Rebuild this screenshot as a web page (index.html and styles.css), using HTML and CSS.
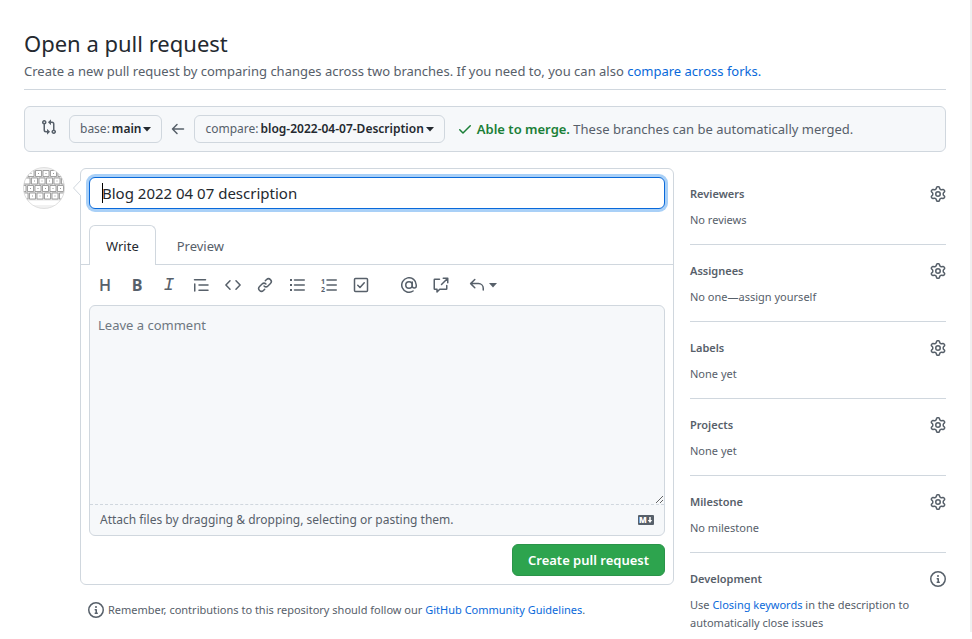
FILE: index.html
```html
<!DOCTYPE html>
<html lang="en">
<head>
<meta charset="utf-8">
<title>Open a pull request</title>
<link rel="stylesheet" href="styles.css">
</head>
<body>
<svg class="sprite" aria-hidden="true">
  <symbol id="gear" viewBox="0 0 16 16"><path d="M8 0a8.2 8.2 0 0 1 .701.031C9.444.095 9.99.645 10.16 1.29l.288 1.107c.018.066.079.158.212.224.231.114.454.243.668.386.123.082.233.09.299.071l1.103-.303c.644-.176 1.392.021 1.82.63.27.385.506.792.704 1.218.315.675.111 1.422-.364 1.891l-.814.806c-.049.048-.098.147-.088.294.016.257.016.515 0 .772-.01.147.038.246.088.294l.814.806c.475.469.679 1.216.364 1.891a7.977 7.977 0 0 1-.704 1.217c-.428.61-1.176.807-1.82.63l-1.102-.302c-.067-.019-.177-.011-.3.071a5.909 5.909 0 0 1-.668.386c-.133.066-.194.158-.211.224l-.29 1.106c-.168.646-.715 1.196-1.458 1.26a8.006 8.006 0 0 1-1.402 0c-.743-.064-1.289-.614-1.458-1.26l-.289-1.106c-.018-.066-.079-.158-.212-.224a5.738 5.738 0 0 1-.668-.386c-.123-.082-.233-.09-.299-.071l-1.103.303c-.644.176-1.392-.021-1.82-.63a8.12 8.12 0 0 1-.704-1.218c-.315-.675-.111-1.422.363-1.891l.815-.806c.05-.048.098-.147.088-.294a6.214 6.214 0 0 1 0-.772c.01-.147-.038-.246-.088-.294l-.815-.806C.635 6.045.431 5.298.746 4.623a7.92 7.92 0 0 1 .704-1.217c.428-.61 1.176-.807 1.82-.63l1.102.302c.067.019.177.011.3-.071.214-.143.437-.272.668-.386.133-.066.194-.158.211-.224l.29-1.106C6.009.645 6.556.095 7.299.03 7.53.01 7.764 0 8 0Zm-.571 1.525c-.036.003-.108.036-.137.146l-.289 1.105c-.147.561-.549.967-.998 1.189-.173.086-.34.183-.5.29-.417.278-.97.423-1.529.27l-1.103-.303c-.109-.03-.175.016-.195.045-.22.312-.412.644-.573.99-.014.031-.021.11.059.19l.815.806c.411.406.562.957.53 1.456a4.709 4.709 0 0 0 0 .582c.032.499-.119 1.05-.53 1.456l-.815.806c-.081.08-.073.159-.059.19.162.346.353.677.573.989.02.03.085.076.195.046l1.102-.303c.56-.153 1.113-.008 1.53.27.161.107.328.204.501.29.447.222.85.629.997 1.189l.289 1.105c.029.109.101.143.137.146a6.6 6.6 0 0 0 1.142 0c.036-.003.108-.036.137-.146l.289-1.105c.147-.561.549-.967.998-1.189.173-.086.34-.183.5-.29.417-.278.97-.423 1.529-.27l1.103.303c.109.029.175-.016.195-.045.22-.313.411-.644.573-.99.014-.031.021-.11-.059-.19l-.815-.806c-.411-.406-.562-.957-.53-1.456a4.709 4.709 0 0 0 0-.582c-.032-.499.119-1.05.53-1.456l.815-.806c.081-.08.073-.159.059-.19a6.464 6.464 0 0 0-.573-.989c-.02-.03-.085-.076-.195-.046l-1.102.303c-.56.153-1.113.008-1.53-.27a4.44 4.44 0 0 0-.501-.29c-.447-.222-.85-.629-.997-1.189l-.289-1.105c-.029-.11-.101-.143-.137-.146a6.6 6.6 0 0 0-1.142 0ZM11 8a3 3 0 1 1-6 0 3 3 0 0 1 6 0ZM9.5 8a1.5 1.5 0 1 0-3.001.001A1.5 1.5 0 0 0 9.5 8Z"/></symbol>
  <symbol id="info" viewBox="0 0 16 16"><path d="M0 8a8 8 0 1 1 16 0A8 8 0 0 1 0 8Zm8-6.5a6.5 6.5 0 1 0 0 13 6.5 6.5 0 0 0 0-13ZM6.5 7.75A.75.75 0 0 1 7.25 7h1a.75.75 0 0 1 .75.75v2.75h.25a.75.75 0 0 1 0 1.5h-2a.75.75 0 0 1 0-1.5h.25v-2h-.25a.75.75 0 0 1-.75-.75ZM8 6a1 1 0 1 1 0-2 1 1 0 0 1 0 2Z"/></symbol>
  <symbol id="caret" viewBox="0 0 8 5"><path d="M0 0h8L4 4.500Z"/></symbol>
</svg>

<main class="page">
  <header class="page-head">
    <h1>Open a pull request</h1>
    <p>Create a new pull request by comparing changes across two branches. If you need to, you can also <a href="#forks">compare across forks.</a></p>
  </header>

  <section class="range" aria-label="Branches">
    <svg class="icon range-icon" viewBox="0 0 16 16" aria-hidden="true"><path d="M9.573.677A.25.25 0 0 1 10 .854V2.500h1A2.500 2.500 0 0 1 13.500 5v5.628a2.251 2.251 0 1 1-1.500 0V5a1 1 0 0 0-1-1h-1v1.646a.25.25 0 0 1-.427.177L7.177 3.427a.25.25 0 0 1 0-.354L9.573.677ZM6 12v-1.646a.25.25 0 0 1 .427-.177l2.396 2.396a.25.25 0 0 1 0 .354l-2.396 2.396A.25.25 0 0 1 6 15.146V13.500H5A2.500 2.500 0 0 1 2.500 11V5.372a2.250 2.250 0 1 1 1.500 0V11a1 1 0 0 0 1 1h1Zm6.750 0a.75.75 0 1 0 0 1.500.75.75 0 0 0 0-1.500ZM4 3.250a.75.75 0 1 0-1.500 0 .75.75 0 0 0 1.500 0Z"/></svg>
    <button type="button" class="branch">base: <b>main</b> <svg class="caret" aria-hidden="true"><use href="#caret"/></svg></button>
    <svg class="icon line arrow" viewBox="0 0 16 16" aria-hidden="true"><path d="M7 3.500 2.500 8 7 12.500M2.500 8h11"/></svg>
    <button type="button" class="branch">compare: <b>blog-2022-04-07-Description</b> <svg class="caret" aria-hidden="true"><use href="#caret"/></svg></button>
    <p class="merge"><svg class="icon" viewBox="0 0 16 16" aria-hidden="true"><path d="M13.780 4.220a.75.75 0 0 1 0 1.060l-7.250 7.250a.75.75 0 0 1-1.060 0L2.220 9.280a.75.75 0 0 1 1.060-1.060L6 10.940l6.720-6.720a.75.75 0 0 1 1.060 0Z"/></svg><span><b>Able to merge.</b> These branches can be automatically merged.</span></p>
  </section>

  <div class="columns">
    <svg class="avatar" viewBox="0 0 42 42" role="img" aria-label="Avatar">
      <defs><clipPath id="disc"><circle cx="21" cy="21" r="20.500"/></clipPath></defs>
      <g clip-path="url(#disc)">
        <rect width="42" height="42" fill="#f1f1f1"/>
        <path d="M0 3h42v32H0Z" fill="#e2e2e2"/>
        <g fill="#fff" stroke="#8e8e8e" stroke-width=".8">
          <path d="M5 3.500h6v6H5zM12.500 3.500h6v6h-6zM20 3.500h6v6h-6zM27.500 3.500h6v6h-6zM35 3.500h6v6h-6z"/>
          <path d="M1 11h6v6H1zM8.500 11h6v6h-6zM16 11h6v6h-6zM23.500 11h6v6h-6zM31 11h6v6h-6zM38.500 11h6v6h-6z"/>
          <path d="M-3 18.500h6v6h-6zM4.500 18.500h6v6h-6zM12 18.500h6v6h-6zM19.500 18.500h6v6h-6zM27 18.500h6v6h-6zM34.500 18.500h6v6h-6z"/>
          <path d="M-1 26h6v6h-6zM6.500 26h6v6h-6zM14 26h6v6h-6zM21.500 26h6v6h-6zM29 26h6v6h-6zM36.500 26h6v6h-6z"/>
        </g>
        <path d="M7.500 6.500h1m6.500 0h1m6.500 0h1m6.500 0h1M11 14h1m6.500 0h1m6.500 0h1m6.500 0h1M7 21.500h1m6.500 0h1m6.500 0h1m6.500 0h1m6.500 0h1M9 29h1m6.500 0h1m6.500 0h1m6.500 0h1" stroke="#999" stroke-width="1"/>
        <path d="M0 33.500h42V38H0Z" fill="#fff"/>
      </g>
      <circle cx="21" cy="21" r="20.500" fill="none" stroke="#d8d8d8" stroke-width=".8"/>
    </svg>

    <div class="main">
      <form class="panel">
        <svg class="pointer" viewBox="0 0 8 16" aria-hidden="true"><path class="fill" d="M8 0 0 8l8 8Z"/><path class="edge" d="M8 0 .5 8 8 16"/></svg>
        <div class="title-field"><input type="text" aria-label="Title" value="Blog 2022 04 07 description"></div>
        <div class="tabs" role="tablist">
          <button type="button" role="tab" class="tab selected" aria-selected="true">Write</button>
          <button type="button" role="tab" class="tab" aria-selected="false">Preview</button>
        </div>
        <div class="toolbar">
          <button type="button" class="letter heading" aria-label="Heading">H</button>
          <button type="button" class="letter bold" aria-label="Bold">B</button>
          <button type="button" class="letter italic" aria-label="Italic">I</button>
          <button type="button" aria-label="Quote"><svg class="icon line" viewBox="0 0 16 16"><path d="M1.500 2.750h11M6 8h9M6 13.250h9M1.750 7v7"/></svg></button>
          <button type="button" aria-label="Code"><svg class="icon line" viewBox="0 0 16 16"><path d="M5 3.750.9 8 5 12.250M11 3.750 15.100 8 11 12.250"/></svg></button>
          <button type="button" aria-label="Link"><svg class="icon" viewBox="0 0 16 16"><path d="m7.775 3.275 1.250-1.250a3.500 3.500 0 1 1 4.950 4.950l-2.500 2.500a3.500 3.500 0 0 1-4.950 0 .751.751 0 0 1 .018-1.042.751.751 0 0 1 1.042-.018 1.998 1.998 0 0 0 2.830 0l2.500-2.500a2.002 2.002 0 0 0-2.830-2.830l-1.250 1.250a.751.751 0 0 1-1.042-.018.751.751 0 0 1-.018-1.042Zm-4.690 9.640a1.998 1.998 0 0 0 2.830 0l1.250-1.250a.751.751 0 0 1 1.042.018.751.751 0 0 1 .018 1.042l-1.250 1.250a3.500 3.500 0 1 1-4.950-4.950l2.500-2.500a3.500 3.500 0 0 1 4.950 0 .751.751 0 0 1-.018 1.042.751.751 0 0 1-1.042.018 1.998 1.998 0 0 0-2.830 0l-2.500 2.500a1.998 1.998 0 0 0 0 2.830Z"/></svg></button>
          <button type="button" aria-label="Bulleted list"><svg class="icon line" viewBox="0 0 16 16"><path d="M5.500 3h9.750M5.500 8h9.750M5.500 13h9.750"/><path class="dots" d="M1 3h2M1 8h2M1 13h2"/></svg></button>
          <button type="button" aria-label="Numbered list"><svg class="icon line" viewBox="0 0 16 16"><path d="M6 3h9.250M6 8h9.250M6 13h9.250"/><text x="0" y="7">1</text><text x="0" y="15">2</text></svg></button>
          <button type="button" aria-label="Task list"><svg class="icon line" viewBox="0 0 16 16"><rect x="1.500" y="1.500" width="13" height="13" rx="1"/><path d="m4.750 8.250 2.250 2.250 4.250-4.750"/></svg></button>
          <button type="button" class="group" aria-label="Mention"><svg class="icon line" viewBox="0 0 16 16"><circle cx="8" cy="8" r="3.250"/><path d="M11.250 5v4a2 2 0 0 0 4 0V8a7.250 7.250 0 1 0-3.200 6"/></svg></button>
          <button type="button" aria-label="Reference"><svg class="icon line" viewBox="0 0 16 16"><path d="M6.500 2.250H1.750a.5.500 0 0 0-.5.500v9a.5.500 0 0 0 .5.500H4v2.750l2.750-2.750h6.500a.5.500 0 0 0 .5-.5V8.500M8.500 7.500l5.500-5.500M10.250 1.250h4.500v4.500"/></svg></button>
          <button type="button" class="reply" aria-label="Saved replies"><svg class="icon line" viewBox="0 0 16 16"><path d="M5.800 2.500 1.600 6.600l4.200 4.100M1.600 6.600h7.900a4.750 4.750 0 0 1 4.750 4.750V13"/></svg><svg class="caret" aria-hidden="true"><use href="#caret"/></svg></button>
        </div>
        <div class="editor">
          <textarea aria-label="Comment" placeholder="Leave a comment"></textarea>
          <div class="attach">
            <span>Attach files by dragging &amp; dropping, selecting or pasting them.</span>
            <svg class="markdown" viewBox="0 0 16 10" role="img" aria-label="Markdown supported"><rect width="16" height="10" rx="1"/><text x="1" y="8">M</text><path d="M11.250 2h1.500v3h1.500L12 8 9.750 5h1.500Z"/></svg>
          </div>
        </div>
        <div class="actions"><button type="submit" class="primary">Create pull request</button></div>
      </form>
      <p class="note"><svg class="icon" aria-hidden="true"><use href="#info"/></svg><span>Remember, contributions to this repository should follow our <a href="#guidelines">GitHub Community Guidelines</a>.</span></p>
    </div>

    <aside class="sidebar">
      <section><h2>Reviewers <button type="button" aria-label="Edit reviewers"><svg class="icon"><use href="#gear"/></svg></button></h2><p>No reviews</p></section>
      <section><h2>Assignees <button type="button" aria-label="Edit assignees"><svg class="icon"><use href="#gear"/></svg></button></h2><p>No one—assign yourself</p></section>
      <section><h2>Labels <button type="button" aria-label="Edit labels"><svg class="icon"><use href="#gear"/></svg></button></h2><p>None yet</p></section>
      <section><h2>Projects <button type="button" aria-label="Edit projects"><svg class="icon"><use href="#gear"/></svg></button></h2><p>None yet</p></section>
      <section><h2>Milestone <button type="button" aria-label="Edit milestone"><svg class="icon"><use href="#gear"/></svg></button></h2><p>No milestone</p></section>
      <section><h2>Development <svg class="icon" aria-hidden="true"><use href="#info"/></svg></h2><p>Use <a href="#keywords">Closing keywords</a> in the description to automatically close issues</p></section>
    </aside>
  </div>
</main>
</body>
</html>
```
FILE: styles.css
```css
:root {
  --text: #24292f;
  --muted: #57606a;
  --border: #d0d7de;
  --subtle: #f6f8fa;
  --link: #0969da;
  --font: "Noto Sans", "Open Sans", sans-serif;
}

* { box-sizing: border-box; }

body {
  margin: 0;
  background: #fff;
  color: var(--muted);
  font: 13px/20px var(--font);
}

h1, h2, p { margin: 0; }
a { color: var(--link); text-decoration: none; }
button { font: inherit; color: inherit; background: none; border: 0; padding: 0; }
b { font-weight: 600; }

.sprite { position: absolute; width: 0; height: 0; }
.icon { display: block; flex: none; width: 16px; height: 16px; fill: currentColor; }
.line { fill: none; stroke: currentColor; stroke-width: 1.5; stroke-linecap: round; stroke-linejoin: round; }
.line .dots { stroke-width: 2; stroke-linecap: butt; }
.line text { fill: currentColor; stroke: none; font: 700 7px "Open Sans", sans-serif; }
.caret { width: 8px; height: 5px; fill: currentColor; }

.page { padding: 27px 24px 0; border-right: 2px solid #f0f0f0; }

.page-head { padding-bottom: 8px; border-bottom: 1px solid var(--border); }
.page-head h1 { color: var(--text); font-size: 22px; font-weight: 400; line-height: 32px; }
.page-head p { padding-top: 2px; }

.range {
  display: flex;
  align-items: center;
  margin: 16px 0;
  padding: 8px 16px;
  background: var(--subtle);
  border: 1px solid var(--border);
  border-radius: 6px;
}
.range-icon { margin: 0 12px 4px 0; }
.branch {
  display: flex;
  align-items: center;
  gap: 2px;
  height: 28px;
  padding: 0 10px;
  border: 1px solid var(--border);
  border-radius: 6px;
  font-size: 12px;
  white-space: nowrap;
}
.branch b, .branch .caret { color: var(--text); }
.arrow { margin: 0 8px; }
.merge { display: flex; align-items: center; gap: 4px; margin-left: 12px; }
.merge b, .merge .icon { color: #1a7f37; }

.columns { display: flex; align-items: flex-start; gap: 16px; }
.avatar { flex: none; width: 42px; height: 42px; margin: -1px; }
.main { flex: 1; min-width: 0; }
.sidebar { flex: none; width: 256px; font-size: 11px; line-height: 18px; }

.panel { position: relative; border: 1px solid var(--border); border-radius: 6px; padding: 8px 0; }
.pointer { position: absolute; left: -8px; top: 11px; width: 8px; height: 16px; }
.pointer .fill { fill: #fff; }
.pointer .edge { fill: none; stroke: var(--border); }

.title-field { position: relative; margin: 0 8px; }
.title-field input {
  display: block;
  width: 100%;
  height: 32px;
  padding: 0 12px;
  border: 1px solid var(--link);
  border-radius: 6px;
  outline: 0;
  box-shadow: 0 0 0 3px #a9d0f7;
  color: var(--text);
  font: 15px/20px var(--font);
}
.title-field::after { content: ""; position: absolute; left: 13px; top: 6px; width: 1px; height: 20px; background: #000; }

.tabs { display: flex; margin-top: 16px; padding: 0 8px; border-bottom: 1px solid var(--border); }
.tab { height: 40px; margin-bottom: -1px; padding: 0 16px; border: 1px solid transparent; border-bottom: 0; border-radius: 6px 6px 0 0; }
.tab + .tab { margin-left: 4px; }
.tab.selected { background: #fff; border-color: var(--border); color: var(--text); }

.toolbar { display: flex; height: 40px; padding: 0 8px; align-items: center; }
.toolbar button { display: flex; align-items: center; justify-content: center; gap: 4px; width: 32px; height: 32px; }
.toolbar .group { margin-left: 16px; }
.toolbar .reply { width: 36px; margin-left: 8px; }
.toolbar .letter { font-family: "Open Sans", sans-serif; font-size: 16px; line-height: 20px; }
.toolbar .heading { font-weight: 600; }
.toolbar .bold { font-weight: 700; }
.toolbar .italic { font: italic 400 18px/20px "Liberation Mono", monospace; }

.editor { margin: 0 8px; background: var(--subtle); border: 1px solid var(--border); border-radius: 6px; }
.editor textarea {
  display: block;
  width: 100%;
  height: 199px;
  padding: 9px 8px;
  border: 0;
  border-bottom: 1px dashed var(--border);
  background: none;
  outline: 0;
  resize: vertical;
  color: var(--text);
  font: inherit;
}
.editor textarea::placeholder { color: #6e7781; }
.attach { display: flex; align-items: center; justify-content: space-between; height: 30px; padding: 0 10px; font-size: 12px; }
.markdown { width: 16px; height: 10px; fill: var(--muted); }
.markdown text, .markdown path { fill: #fff; }
.markdown text { font: 800 8px "Open Sans", sans-serif; }

.actions { display: flex; justify-content: flex-end; margin: 8px 8px 0; }
.primary {
  height: 32px;
  padding: 0 15px;
  border: 1px solid #2a9449;
  border-radius: 6px;
  background: #2da44e;
  color: #fff;
  font-weight: 600;
}

.note { display: flex; align-items: center; gap: 4px; margin: 15px 8px 0; font-size: 11px; }

.sidebar section { padding: 17px 0 15px; border-bottom: 1px solid var(--border); }
.sidebar section:last-child { padding-bottom: 0; border: 0; }
.sidebar h2 { display: flex; align-items: center; justify-content: space-between; margin-bottom: 8px; font-size: 11px; font-weight: 600; line-height: 18px; }
```
